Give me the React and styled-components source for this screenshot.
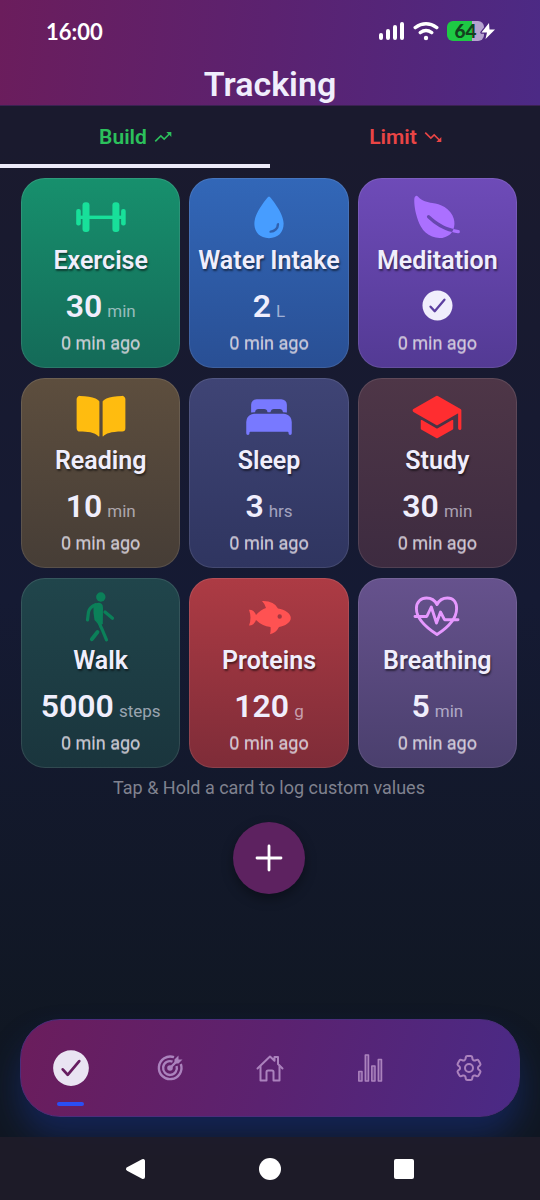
import { useState } from "react";
import styled, { createGlobalStyle } from "styled-components";
import { IoWater, IoLeaf, IoBook, IoBed, IoSchool, IoCheckmarkCircle } from "react-icons/io5";
import { MdTrendingUp, MdTrendingDown } from "react-icons/md";
import { HiOutlineCog6Tooth } from "react-icons/hi2";

const cards = [
  { name: "Exercise", value: "30", unit: "min", icon: BarbellIcon, color: "#18e09a", from: "#17906d", to: "#146a58" },
  { name: "Water Intake", value: "2", unit: "L", icon: IoWater, color: "#479dff", from: "#3267b8", to: "#294f94" },
  { name: "Meditation", done: true, icon: IoLeaf, color: "#ab70ff", from: "#6e4bb8", to: "#533a94" },
  { name: "Reading", value: "10", unit: "min", icon: IoBook, color: "#ffbc0f", from: "#5d4e3e", to: "#463d36" },
  { name: "Sleep", value: "3", unit: "hrs", icon: IoBed, color: "#7879ff", from: "#3f4475", to: "#2f3560" },
  { name: "Study", value: "30", unit: "min", icon: IoSchool, color: "#ff2d30", from: "#4e3647", to: "#3d2b40" },
  { name: "Walk", value: "5000", unit: "steps", icon: WalkIcon, color: "#0b8059", from: "#20454b", to: "#1a353d" },
  { name: "Proteins", value: "120", unit: "g", icon: FishIcon, color: "#ff5252", from: "#ad3b44", to: "#7e2c38" },
  { name: "Breathing", value: "5", unit: "min", icon: HeartPulse, color: "#e698ff", from: "#66528d", to: "#4a3f6d" },
];

const navItems = [
  { id: "tracking", label: "Tracking", icon: IoCheckmarkCircle, size: 44 },
  { id: "goals", label: "Goals", icon: TargetIcon, size: 28 },
  { id: "home", label: "Home", icon: HomeIcon, size: 28 },
  { id: "stats", label: "Stats", icon: ChartIcon, size: 28 },
  { id: "settings", label: "Settings", icon: HiOutlineCog6Tooth, size: 32 },
];

export default function App() {
  const [tab, setTab] = useState("build");
  const [page, setPage] = useState("tracking");

  return (
    <>
      <GlobalStyle />
      <Screen>
        <Header>
          <StatusBar>
            <Time>16:00</Time>
            <StatusIcons>
              <SignalIcon />
              <WifiIcon />
              <Battery>
                64
                <BoltIcon />
              </Battery>
            </StatusIcons>
          </StatusBar>
          <Title>Tracking</Title>
        </Header>

        <Tabs role="tablist">
          <Tab role="tab" $color="#2cc05c" $active={tab === "build"} aria-selected={tab === "build"} onClick={() => setTab("build")}>
            Build <MdTrendingUp size={20} />
          </Tab>
          <Tab role="tab" $color="#ea4545" $active={tab === "limit"} aria-selected={tab === "limit"} onClick={() => setTab("limit")}>
            Limit <MdTrendingDown size={20} />
          </Tab>
        </Tabs>

        <Main>
          <Grid>
            {cards.map(({ icon: Icon, ...card }) => (
              <Card key={card.name} $from={card.from} $to={card.to}>
                <CardIcon $color={card.color}>
                  <Icon size={52} />
                </CardIcon>
                <CardName>{card.name}</CardName>
                <Amount>
                  {card.done ? (
                    <IoCheckmarkCircle size={37} />
                  ) : (
                    <>
                      <Value>{card.value}</Value>
                      <Unit>{card.unit}</Unit>
                    </>
                  )}
                </Amount>
                <Ago>0 min ago</Ago>
              </Card>
            ))}
          </Grid>
          <Hint>Tap &amp; Hold a card to log custom values</Hint>
          <AddButton aria-label="Add">
            <PlusIcon />
          </AddButton>
        </Main>

        <Nav>
          {navItems.map(({ id, label, icon: Icon, size }) => (
            <NavButton key={id} aria-label={label} $active={page === id} onClick={() => setPage(id)}>
              <Icon size={size} />
            </NavButton>
          ))}
        </Nav>

        <SystemBar>
          <SystemButton aria-label="Back">
            <svg width="24" height="24" viewBox="0 0 24 24" fill="#fff" stroke="#fff" strokeWidth="4" strokeLinejoin="round">
              <path d="M4 12 L19 4 V20 Z" />
            </svg>
          </SystemButton>
          <SystemButton aria-label="Home screen">
            <svg width="24" height="24" viewBox="0 0 24 24" fill="#fff">
              <circle cx="12" cy="12" r="11" />
            </svg>
          </SystemButton>
          <SystemButton aria-label="Recent apps">
            <svg width="24" height="24" viewBox="0 0 24 24" fill="#fff">
              <rect x="2" y="2" width="20" height="20" rx="2" />
            </svg>
          </SystemButton>
        </SystemBar>
      </Screen>
    </>
  );
}

function SignalIcon() {
  return (
    <svg width="26" height="20" viewBox="0 0 26 20" fill="#fff">
      <rect x="0" y="12" width="4" height="7" rx="2" />
      <rect x="7" y="8" width="4" height="11" rx="2" />
      <rect x="14" y="4" width="4" height="15" rx="2" />
      <rect x="21" y="1" width="4" height="18" rx="2" />
    </svg>
  );
}

function WifiIcon() {
  return (
    <svg width="26" height="20" viewBox="0 0 26 20" fill="none" stroke="#fff" strokeWidth="3.4" strokeLinecap="round">
      <path d="M2.2 6.6 Q13 -1 23.8 6.6" />
      <path d="M7.2 11.6 Q13 7.6 18.8 11.6" />
      <circle cx="13" cy="17" r="2.2" fill="#fff" stroke="none" />
    </svg>
  );
}

function BoltIcon() {
  return (
    <svg width="16" height="20" viewBox="0 0 16 20">
      <path d="M9 2 L1.5 11.5 H7 L5.5 18 L15 8.5 H9.5 Z" fill="#fff" stroke="#4f2a80" strokeWidth="2.4" strokeLinejoin="round" paintOrder="stroke" />
    </svg>
  );
}

function PlusIcon() {
  return (
    <svg width="28" height="28" viewBox="0 0 28 28" stroke="#fff" strokeWidth="2.8" strokeLinecap="round">
      <path d="M14 2 V26 M2 14 H26" />
    </svg>
  );
}

function BarbellIcon({ size }) {
  return (
    <svg width={size} height={size} viewBox="0 0 52 52" fill="currentColor">
      <rect x="1.2" y="18" width="4.6" height="16.4" rx="2" />
      <rect x="7.5" y="11.2" width="7" height="29.8" rx="3" />
      <rect x="37.4" y="11.2" width="7" height="29.8" rx="3" />
      <rect x="46.1" y="18" width="4.6" height="16.4" rx="2" />
      <rect x="4" y="24.6" width="44" height="3.4" />
    </svg>
  );
}

function WalkIcon({ size }) {
  return (
    <svg width={size} height={size} viewBox="0 0 52 52" fill="none" stroke="currentColor" strokeWidth="3.2" strokeLinecap="round" strokeLinejoin="round">
      <circle cx="25.8" cy="6" r="4.7" fill="currentColor" stroke="none" />
      <path d="M18.5 15 Q20 11.8 24 11.8 Q28 12 28 17 L27.8 33 L24.5 34.5 L19.5 29 Q18 22 18.5 15 Z" fill="currentColor" stroke="none" />
      <path d="M20.5 13.7 Q14.5 16 13.5 21 L12.5 29" />
      <path d="M30 21 L37.5 27.3" />
      <path d="M23 29 L25.5 35 Q27 38 28 40.5 L31.5 48.8" />
      <path d="M22.5 41 L16.8 48.2" strokeWidth="3.8" />
    </svg>
  );
}

function FishIcon({ size }) {
  return (
    <svg width={size} height={size} viewBox="0 0 52 52" fill="currentColor" fillRule="evenodd">
      <path d="M6 18.7 Q11 18.5 13 24 Q18 18.5 23 17 Q22 13 19 10 Q31 9.5 35 17.5 C42 18.5 47.8 22.5 47.8 27 C47.8 31.5 42 35 36 36 Q33 42 27 43.2 Q28 39 27.5 36 Q19 35 13 29 Q11 34.5 6 34.5 Q9 27 6 18.7 Z M34.5 25.5 A2.2 2.2 0 1 0 38.9 25.5 A2.2 2.2 0 1 0 34.5 25.5 Z" />
    </svg>
  );
}

function HeartPulse({ size }) {
  return (
    <svg width={size} height={size} viewBox="0 0 52 52" fill="none" stroke="currentColor" strokeWidth="2.9" strokeLinecap="round" strokeLinejoin="round">
      <path d="M26 43.5 C19 39 5.4 30 5.4 17.5 C5.4 11 10 7 15.5 7 C20.5 7 24 9.5 26 13.5 C28 9.5 31.5 7 36.5 7 C42 7 45.6 11 45.6 17.5 C45.6 30 33 39 26 43.5 Z" />
      <path d="M4 25.5 H15.8 L20.3 16 L25.5 32 L29.5 21 L33.5 28.7 H47" />
    </svg>
  );
}

function TargetIcon({ size }) {
  return (
    <svg width={size} height={size} viewBox="0 0 28 28" fill="none" stroke="currentColor" strokeWidth="2.4">
      <path d="M18 3.2 A11.3 11.3 0 1 0 24.8 10" />
      <path d="M16.5 7.6 A6.9 6.9 0 1 0 20.6 12" />
      <circle cx="14" cy="14" r="2.8" fill="currentColor" stroke="none" />
      <path d="M14 14 L20 8" />
      <path d="M18.5 9.5 V5.5 L22.5 1.5 V5.5 H26.5 L22.5 9.5 Z" fill="currentColor" stroke="none" />
    </svg>
  );
}

function HomeIcon({ size }) {
  return (
    <svg width={size} height={size} viewBox="0 0 28 28" fill="none" stroke="currentColor" strokeWidth="2" strokeLinecap="round" strokeLinejoin="round">
      <path d="M1.5 14.5 L14 2.5 L18.5 6.8 V3 H22 V10 L26.5 14.5" />
      <path d="M4.5 12.5 V26.5 H10.5 V18 Q10.5 16.5 12 16.5 H16 Q17.5 16.5 17.5 18 V26.5 H23.5 V12.5" />
    </svg>
  );
}

function ChartIcon({ size }) {
  return (
    <svg width={size} height={size} viewBox="0 0 28 28" fill="currentColor" fillOpacity="0.4" stroke="currentColor" strokeWidth="1.5" strokeLinejoin="round">
      <rect x="2.8" y="17.5" width="3.2" height="9.5" />
      <rect x="9.3" y="1" width="3.2" height="26" />
      <rect x="15.8" y="12" width="3.2" height="15" />
      <rect x="22.3" y="5.5" width="3.2" height="21.5" />
    </svg>
  );
}

const GlobalStyle = createGlobalStyle`
  * {
    box-sizing: border-box;
  }

  body {
    margin: 0;
    font-family: Roboto, "Liberation Sans", sans-serif;
    color: #f0eefc;
  }

  button {
    border: none;
    margin: 0;
    padding: 0;
    background: none;
    color: inherit;
    font-family: inherit;
    cursor: pointer;
  }

  svg {
    display: block;
  }
`;

const Screen = styled.div`
  min-height: 100vh;
  display: flex;
  flex-direction: column;
  background: linear-gradient(180deg, #1a1a2e 0%, #1a1a2e 12%, #151a33 50%, #101722 88%);
`;

const Header = styled.header`
  display: flex;
  flex-direction: column;
  background: linear-gradient(95deg, #6b1d5c 0%, #5b2270 50%, #4c2a85 100%);
  border-bottom: 1px solid #3b2152;
`;

const StatusBar = styled.div`
  height: 62px;
  padding: 0 44px 0 46px;
  display: flex;
  align-items: center;
  justify-content: space-between;
`;

const Time = styled.span`
  font-family: Lato, Roboto, sans-serif;
  font-size: 22px;
  font-weight: 700;
  color: #fff;
`;

const StatusIcons = styled.div`
  display: flex;
  align-items: center;
  gap: 8px;
`;

const Battery = styled.span`
  position: relative;
  width: 37px;
  height: 20px;
  margin-right: 12px;
  border-radius: 6px;
  display: flex;
  align-items: center;
  justify-content: center;
  background: linear-gradient(90deg, #1ec944 67%, #b5a3cf 67%);
  font-family: Lato, Roboto, sans-serif;
  font-size: 19px;
  font-weight: 900;
  line-height: 20px;
  color: #14401f;

  svg {
    position: absolute;
    right: -12px;
    top: 0;
  }
`;

const Title = styled.h1`
  margin: 0;
  padding-top: 2px;
  font-size: 34px;
  font-weight: 600;
  line-height: 41px;
  text-align: center;
`;

const Tabs = styled.div`
  display: flex;
`;

const Tab = styled.button`
  flex: 1;
  height: 62px;
  display: flex;
  align-items: center;
  justify-content: center;
  gap: 6px;
  border-top: 4px solid transparent;
  border-bottom: 4px solid ${props => props.$active ? "#eceaf8" : "transparent"};
  padding-left: 2px;
  color: ${props => props.$color};
  font-size: 21px;
  font-weight: 600;
`;

const Main = styled.main`
  flex: 1;
  display: flex;
  flex-direction: column;
  align-items: center;
  padding: 10px 23px 0 21px;
`;

const Grid = styled.div`
  width: 100%;
  display: grid;
  grid-template-columns: repeat(3, 1fr);
  gap: 10px 9px;
`;

const Card = styled.button`
  height: 190px;
  display: flex;
  flex-direction: column;
  align-items: center;
  justify-content: flex-start;
  padding-top: 12px;
  border: 1px solid rgba(255, 255, 255, 0.1);
  border-radius: 24px;
  background: linear-gradient(180deg, ${props => props.$from}, ${props => props.$to}) border-box;
`;

const CardIcon = styled.span`
  color: ${props => props.$color};
`;

const CardName = styled.span`
  font-size: 25px;
  font-weight: 600;
  line-height: 36px;
  white-space: nowrap;
  text-shadow: 1px 2px 2px rgba(0, 0, 0, 0.5);
`;

const Amount = styled.span`
  height: 53px;
  display: flex;
  align-items: center;
  gap: 5px;
`;

const Value = styled.span`
  font-size: 32px;
  font-weight: 600;
  line-height: 40px;
`;

const Unit = styled.span`
  padding-top: 10px;
  font-size: 17px;
  line-height: 20px;
  color: rgba(240, 238, 252, 0.6);
`;

const Ago = styled.span`
  font-size: 18px;
  line-height: 22px;
  color: rgba(225, 221, 230, 0.7);
  text-shadow: 0 1px 0 rgba(225, 221, 230, 0.6);
`;

const Hint = styled.p`
  margin: 0;
  padding-top: 8px;
  font-size: 18px;
  line-height: 24px;
  color: #80828f;
`;

const AddButton = styled.button`
  width: 72px;
  height: 72px;
  margin-top: 22px;
  border-radius: 50%;
  display: flex;
  align-items: center;
  justify-content: center;
  background: #5d2260;
  box-shadow: 0 5px 12px rgba(0, 0, 0, 0.35);
`;

const Nav = styled.nav`
  height: 98px;
  margin: 0 20px 20px;
  display: flex;
  border: 1px solid #4b2d7c;
  border-radius: 40px;
  background: linear-gradient(105deg, #6b1d5c 0%, #5b2270 50%, #4a2a86 100%);
  box-shadow: 0 20px 32px rgba(24, 54, 160, 0.4);
`;

const NavButton = styled.button`
  position: relative;
  flex: 1;
  display: flex;
  align-items: center;
  justify-content: center;
  color: ${props => props.$active ? "#e9e4f2" : "#ab82bd"};

  &::after {
    content: "";
    display: ${props => props.$active ? "block" : "none"};
    position: absolute;
    bottom: 10px;
    width: 27px;
    height: 4px;
    border-radius: 2px;
    background: #2a4ef5;
  }
`;

const SystemBar = styled.footer`
  position: relative;
  height: 63px;
  padding: 0 69px;
  display: flex;
  align-items: center;
  background: rgba(31, 28, 41, 0.9);
`;

const SystemButton = styled.button`
  flex: 1;
  display: flex;
  justify-content: center;
`;
